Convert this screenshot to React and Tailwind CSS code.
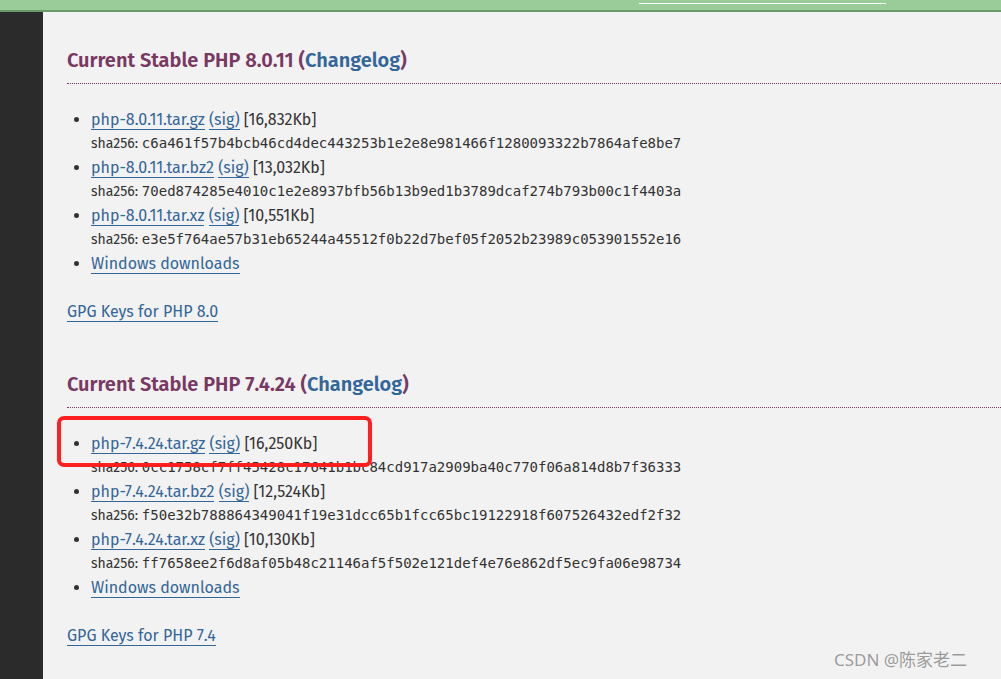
import React from "react";

const sans = { fontFamily: "'Fira Sans', Lato, 'Open Sans', sans-serif" };

function Item({ name, size, hash }) {
  return (
    <li className="leading-[24px]">
      <div className="h-[24px] text-[16px] text-[#333]">
        <a className="text-[#369] border-b border-[#369]">{name}</a>{" "}
        <a className="text-[#369] border-b border-[#369]">(sig)</a>{" "}
        <span>[{size}]</span>
      </div>
      <div className="h-[24px] text-[14px] text-[#333] overflow-visible whitespace-nowrap">
        sha256:{" "}
        <span className="font-['DejaVu_Sans_Mono',monospace] text-[14px] leading-[20px]">{hash}</span>
      </div>
    </li>
  );
}

function Release({ version, short, files }) {
  return (
    <section>
      <h3 className="text-[20px] font-semibold leading-[30px] text-[#793862] pb-[8px] border-b border-dotted border-[#793862]">
        Current Stable PHP {version} (<a className="text-[#369]">Changelog</a>)
      </h3>
      <ul className="list-disc pl-[24px] mt-[24px] marker:text-[#333]">
        {files.map((f) => (
          <Item key={f.name} {...f} />
        ))}
        <li className="h-[24px] leading-[24px] text-[16px]">
          <a className="text-[#369] border-b border-[#369]">Windows downloads</a>
        </li>
      </ul>
      <p className="mt-[24px] h-[24px] leading-[24px] text-[16px]">
        <a className="text-[#369] border-b border-[#369]">GPG Keys for PHP {short}</a>
      </p>
    </section>
  );
}

export default function App() {
  return (
    <div className="relative w-[1001px] h-[679px] overflow-hidden bg-[#f2f2f2]" style={sans}>
      <div className="h-[10px] bg-[#99cc99] border-b-2 border-[#6a9a6a] box-content flex pl-[639px]">
        <div className="w-[247px] h-px mt-[3px] bg-white" />
      </div>
      <div className="flex h-[667px]">
        <div className="w-[43px] shrink-0 bg-[#2b2b2b]" />
        <div className="flex-1 pl-[24px] pt-[33px] flex flex-col gap-[45px]">
          <Release
            version="8.0.11"
            short="8.0"
            files={[
              { name: "php-8.0.11.tar.gz", size: "16,832Kb", hash: "c6a461f57b4bcb46cd4dec443253b1e2e8e981466f1280093322b7864afe8be7" },
              { name: "php-8.0.11.tar.bz2", size: "13,032Kb", hash: "70ed874285e4010c1e2e8937bfb56b13b9ed1b3789dcaf274b793b00c1f4403a" },
              { name: "php-8.0.11.tar.xz", size: "10,551Kb", hash: "e3e5f764ae57b31eb65244a45512f0b22d7bef05f2052b23989c053901552e16" },
            ]}
          />
          <Release
            version="7.4.24"
            short="7.4"
            files={[
              { name: "php-7.4.24.tar.gz", size: "16,250Kb", hash: "0cc1758cf7ff45428c17641b1bc84cd917a2909ba40c770f06a814d8b7f36333" },
              { name: "php-7.4.24.tar.bz2", size: "12,524Kb", hash: "f50e32b788864349041f19e31dcc65b1fcc65bc19122918f607526432edf2f32" },
              { name: "php-7.4.24.tar.xz", size: "10,130Kb", hash: "ff7658ee2f6d8af05b48c21146af5f502e121def4e76e862df5ec9fa06e98734" },
            ]}
          />
        </div>
      </div>
      <div className="absolute left-[57px] top-[416px] w-[315px] h-[51px] border-[4px] border-[#ff1f1f] rounded-[7px]" />
      <div
        className="absolute left-[834px] top-[648px] text-[17px] text-[#9a9a9a] leading-[24px]"
        style={{ fontFamily: "'Noto Sans', 'Noto Sans CJK SC', sans-serif", textShadow: "0 0 1px #fff" }}
      >
        CSDN @陈家老二
      </div>
    </div>
  );
}
